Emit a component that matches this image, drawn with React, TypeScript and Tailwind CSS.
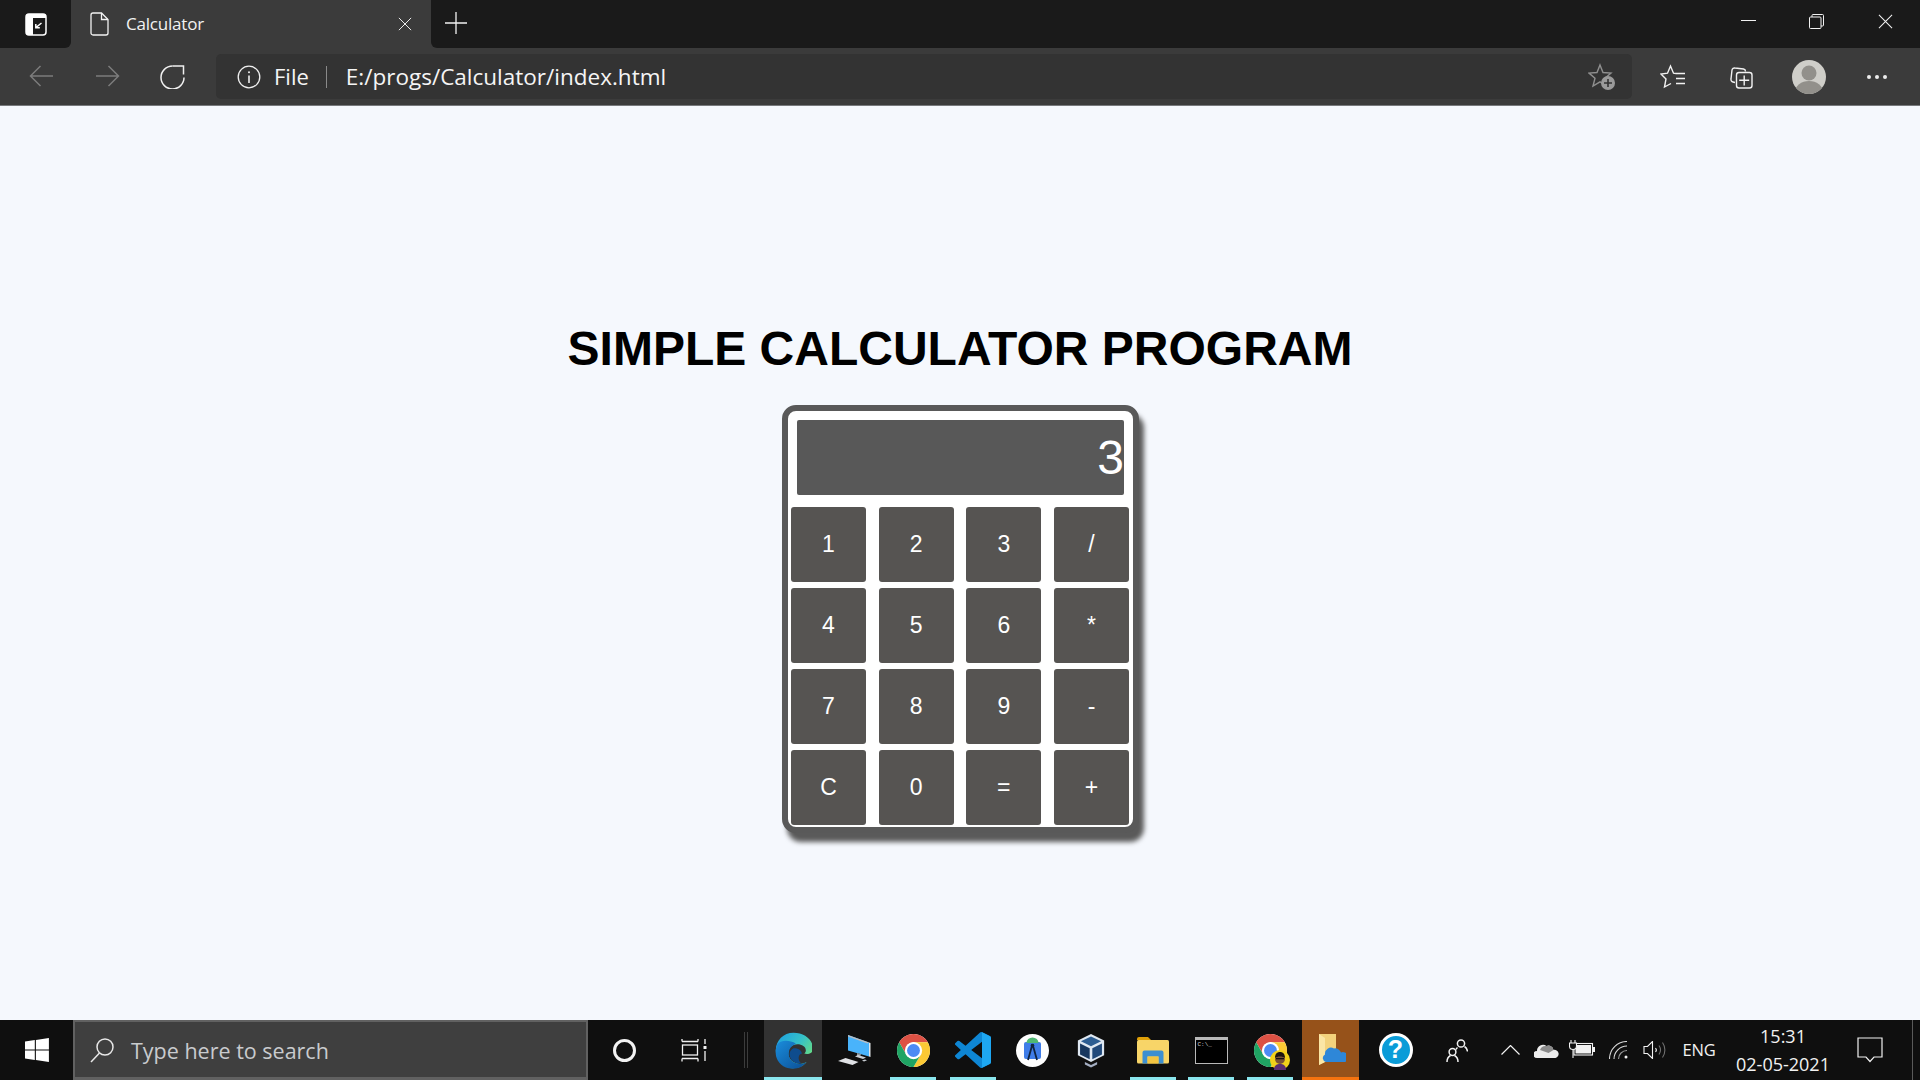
import type { ReactNode } from "react";

const uiFont = "font-['Open_Sans','Noto_Sans',sans-serif]";

const keys = ["1", "2", "3", "/", "4", "5", "6", "*", "7", "8", "9", "-", "C", "0", "=", "+"];

// ── Browser chrome icons ───────────────────────────────────────────────
function TabActionsIcon() {
  return (
    <svg width="22" height="23" viewBox="0 0 22 23" fill="none">
      <rect x="1" y="1" width="20" height="21" rx="3" fill="#1a1a1a" stroke="#fff" strokeWidth="1.500" />
      <path d="M1 3a2 2 0 0 1 2-2h16a2 2 0 0 1 2 2v2H8v17H3a2 2 0 0 1-2-2z" fill="#fff" />
      <path d="M16.500 10l-5.500 4.500M10.800 11v3.800h4" stroke="#fff" strokeWidth="1.500" />
    </svg>
  );
}

function PageIcon() {
  return (
    <svg width="19" height="24" viewBox="0 0 19 24" fill="none" stroke="#f2f2f2" strokeWidth="1.300">
      <path d="M3 1h8.500l6.500 6.500V21a2 2 0 0 1-2 2H3a2 2 0 0 1-2-2V3a2 2 0 0 1 2-2z" />
      <path d="M11.500 1v6.500H18" />
    </svg>
  );
}

function XIcon({ size, color = "#f2f2f2" }: { size: number; color?: string }) {
  return (
    <svg width={size} height={size} viewBox="0 0 16 16" fill="none" stroke={color} strokeWidth="1.100">
      <path d="M1 1l14 14M15 1L1 15" />
    </svg>
  );
}

function ArrowIcon({ flip }: { flip?: boolean }) {
  return (
    <svg width="25" height="22" viewBox="0 0 25 22" fill="none" stroke="#7c7c7c" strokeWidth="1.500" className={flip ? "-scale-x-100" : ""}>
      <path d="M24 11H1.500M11.500 1L1.500 11l10 10" />
    </svg>
  );
}

function RefreshIcon() {
  return (
    <svg width="26" height="27" viewBox="0 0 26 27" fill="none" stroke="#f0f0f0" strokeWidth="1.500">
      <path d="M24 15.500a11.500 11.500 0 1 1-11.500-11.500" />
      <path d="M12.500 4h11v8.500" />
    </svg>
  );
}

function InfoIcon() {
  return (
    <svg width="24" height="24" viewBox="0 0 24 24" fill="none" stroke="#f0f0f0" strokeWidth="1.300">
      <circle cx="12" cy="12" r="10.800" />
      <path d="M12 10.500v7.500" strokeWidth="1.600" />
      <circle cx="12" cy="7.200" r="1" fill="#f0f0f0" stroke="none" />
    </svg>
  );
}

function StarAddIcon() {
  return (
    <svg width="28" height="28" viewBox="0 0 28 28" fill="none">
      <path d="M11 2l3 7.500 8 .6-6 5.200 2 7.700-7-4.200-7 4.200 2-7.700-6-5.200 8-.6z" stroke="#8f8f8f" strokeWidth="1.400" transform="translate(1 0)" />
      <circle cx="20" cy="20" r="7" fill="#9a9a9a" />
      <path d="M20 16v8M16 20h8" stroke="#333" strokeWidth="1.600" />
    </svg>
  );
}

function FavoritesIcon() {
  return (
    <svg width="26" height="26" viewBox="0 0 26 26" fill="none" stroke="#f2f2f2" strokeWidth="1.400">
      <path d="M16 9.500l-2.500-.3L10.500 2 7.500 9.200l-6.500.8 5 5-1.500 8L11 19.500" />
      <path d="M16 9.500h9M16 14.500h9M16 19.500h9" />
    </svg>
  );
}

function CollectionsIcon() {
  return (
    <svg width="26" height="26" viewBox="0 0 26 26" fill="none" stroke="#f2f2f2" strokeWidth="1.400">
      <path d="M7 18.500l-2-.5a2.500 2.500 0 0 1-2-3L4 6a2.500 2.500 0 0 1 3-2l8.500 1a2.500 2.500 0 0 1 2 2.500" />
      <rect x="8.500" y="8.500" width="15.500" height="15.500" rx="2.500" />
      <path d="M16.200 11.500v10M11.200 16.300h10" />
    </svg>
  );
}

function AvatarIcon() {
  return (
    <svg width="34" height="34" viewBox="0 0 34 34">
      <defs>
        <clipPath id="avatar-clip">
          <circle cx="17" cy="17" r="17" />
        </clipPath>
      </defs>
      <circle cx="17" cy="17" r="17" fill="#cfcec9" />
      <g clipPath="url(#avatar-clip)" fill="#92908b">
        <circle cx="17" cy="13" r="7.500" />
        <ellipse cx="17" cy="32" rx="14" ry="11" />
      </g>
    </svg>
  );
}

// ── Taskbar icons ──────────────────────────────────────────────────────
function WindowsIcon() {
  return (
    <svg width="24" height="24" viewBox="0 0 24 24" fill="#fff">
      <path d="M0 3.500l9.800-1.400v9.300H0zM10.900 2l13-2v11.400h-13zM0 12.600h9.800v9.300L0 20.500zM10.900 12.600h13V24l-13-2z" />
    </svg>
  );
}

function SearchIcon() {
  return (
    <svg width="26" height="26" viewBox="0 0 26 26" fill="none" stroke="#e8e8e8" strokeWidth="1.500">
      <circle cx="16" cy="10" r="8" />
      <path d="M10.500 16L2 25" />
    </svg>
  );
}

function TaskViewIcon() {
  return (
    <svg width="26" height="24" viewBox="0 0 26 24" fill="none" stroke="#f2f2f2" strokeWidth="1.300">
      <path d="M1 3.500h16M1 1v2.500M17 1v2.500" />
      <rect x="1.500" y="7" width="15" height="10" />
      <path d="M1 20.500h16M1 20.500v3M17 20.500v3" />
      <path d="M24 1v5M24 13v10" />
      <rect x="22.500" y="8" width="3" height="3" fill="#f2f2f2" stroke="none" />
    </svg>
  );
}

function EdgeIcon() {
  return (
    <svg width="37" height="37" viewBox="0 0 48 48">
      <defs>
        <linearGradient id="edge-top" x1="0" y1="0" x2="1" y2="0.7">
          <stop offset="0" stopColor="#1b9de2" />
          <stop offset="0.55" stopColor="#35c1c8" />
          <stop offset="1" stopColor="#6fe07a" />
        </linearGradient>
        <linearGradient id="edge-low" x1="0" y1="0" x2="1" y2="1">
          <stop offset="0" stopColor="#1a8ddc" />
          <stop offset="1" stopColor="#0b4e94" />
        </linearGradient>
      </defs>
      <path d="M24 1C11 1 1 11 1 24c0 13 10 23 22 23 8 0 14-3 18-8-5 3-11 3-15 1-5-2-9-7-9-13 0-6 5-11 12-11 6 0 11 3 11 8 0 2-1 3-2 4 2 1 6 1 9-1 2-2 2-4 2-7C49 10 38 1 24 1z" fill="url(#edge-top)" />
      <path d="M3 16c-6 14 1 28 15 31 9 2 18-1 23-8-5 3-11 3-15 1-5-2-9-7-8-13 0-5 3-9 9-12-8-5-20-5-24 1z" fill="url(#edge-low)" />
      <path d="M27 40c-5-2-9-7-8-13 1-3 3-5 5-6 6 0 10 2 11 7-5 1-6 8-1 13-3 0-5 0-7-1z" fill="#0e4c8d" />
    </svg>
  );
}

function ComputerIcon() {
  return (
    <svg width="34" height="32" viewBox="0 0 34 32">
      <path d="M11 1l21 7.500v14L11 16.500z" fill="#49b3fb" />
      <path d="M11 1l21 7.500-1.500 1L11 2.500z" fill="#b8bdc2" />
      <path d="M32 8.500l1.500.5v14l-1.500-.5z" fill="#e2e5e8" />
      <path d="M20 19l4 1-1 3-3-1z" fill="#8f969c" />
      <path d="M18 22.500l3-1.500 8 2.500-3 1.500z" fill="#c9ced3" />
      <path d="M1 27l7.500-3 13 4-6 3z" fill="#e0e2e5" />
      <path d="M25 26.500l3-1 2 .8-3 1.200z" fill="#c9ced3" />
    </svg>
  );
}

function ChromeIcon() {
  const sector = "M43.050 13A22 22 0 0 0 4.950 13L14.470 29.500A11.500 11.500 0 0 1 24 13Z";
  return (
    <svg width="33" height="33" viewBox="2 2 44 44" className="block">
      <circle cx="24" cy="24" r="22" fill="#fff" />
      <path d={sector} fill="#dd5144" />
      <path d={sector} fill="#fcc934" transform="rotate(120 24 24)" />
      <path d={sector} fill="#1fa463" transform="rotate(240 24 24)" />
      <circle cx="24" cy="24" r="11.500" fill="#fff" />
      <circle cx="24" cy="24" r="8.600" fill="#4c8bf5" />
    </svg>
  );
}

function ProfileChromeIcon() {
  return (
    <div className="relative">
      <ChromeIcon />
      {/* profile badge */}
      <svg width="20" height="20" viewBox="0 0 20 20" className="absolute top-[16px] left-[16px]">
        <circle cx="10" cy="10" r="10" fill="#f1d11a" />
        <circle cx="10" cy="9" r="5" fill="#7a5236" />
        <path d="M5 8c0-4 2-6 5-6s5 2 5 6c-2-2-8-2-10 0z" fill="#1d1410" />
        <rect x="6" y="8" width="8" height="1.300" fill="#111" />
        <path d="M4 20c0-5 3-6 6-6s6 1 6 6z" fill="#5c2f72" />
      </svg>
    </div>
  );
}

function VscodeIcon() {
  return (
    <svg width="36" height="36" viewBox="0 0 24 24">
      <path
        d="M23.150 2.587L18.210.21a1.494 1.494 0 0 0-1.705.29l-9.460 8.630-4.120-3.128a.999.999 0 0 0-1.276.057L.327 7.261A1 1 0 0 0 .326 8.740L3.899 12 .326 15.260a1 1 0 0 0 .001 1.479L1.650 17.940a.999.999 0 0 0 1.276.057l4.120-3.128 9.460 8.630a1.492 1.492 0 0 0 1.704.29l4.942-2.377A1.500 1.500 0 0 0 24 20.060V3.939a1.500 1.500 0 0 0-.850-1.352zm-5.146 14.861L10.826 12l7.178-5.448v10.896z"
        fill="#0e86d4"
      />
      <path d="M18 .1l5.150 2.487A1.500 1.500 0 0 1 24 3.939V20.060a1.500 1.500 0 0 1-.850 1.352L18 23.900z" fill="#1ea7f2" />
    </svg>
  );
}

function AndroidStudioIcon() {
  return (
    <svg width="33" height="33" viewBox="0 0 33 33">
      <circle cx="16.500" cy="16.500" r="16.500" fill="#fff" />
      <rect x="8" y="8" width="17" height="17" rx="2" fill="#3f7de8" />
      <path d="M10.500 9a6 5.500 0 0 1 12 0z" fill="#4fb873" />
      <path d="M16.500 10l-4.500 16M16.500 10l4.500 16" stroke="#10243f" strokeWidth="1.800" fill="none" />
      <circle cx="16.500" cy="11.500" r="1.800" fill="#10243f" />
    </svg>
  );
}

function VirtualBoxIcon() {
  return (
    <svg width="30" height="35" viewBox="0 0 34 40">
      <path d="M17 1l15 7.500v17L17 33 2 25.500v-17z" fill="#dfe8f2" />
      <path d="M17 4l11.500 5.500L17 15 5.500 9.500z" fill="#2c5d92" />
      <path d="M4.500 12L15.500 17.500V30L4.500 24.500z" fill="#17375f" />
      <path d="M18.500 17.500L29.500 12V24.500L18.500 30z" fill="#21497a" />
      <path d="M10 33l7 3.500 7-3.500v3l-7 3.500-7-3.500z" fill="#a4aec2" />
    </svg>
  );
}

function ExplorerIcon() {
  return (
    <svg width="32" height="27" viewBox="0 0 32 27">
      <path d="M0 2a2 2 0 0 1 2-2h9l3 3h-14z" fill="#e0a008" />
      <rect x="0" y="3" width="32" height="23.500" rx="1.500" fill="#f8d568" />
      <path d="M5.500 26.500v-11a2 2 0 0 1 2-2h17a2 2 0 0 1 2 2v11h-5v-7h-11v7z" fill="#3d8fd1" />
      <rect x="10.500" y="19.500" width="11" height="7" fill="#f4c542" />
    </svg>
  );
}

function CmdIcon() {
  return (
    <div className="flex h-[27px] w-[33px] flex-col border border-[#b9b9b9]">
      <div className="h-[2px] bg-[#b9b9b9]" />
      <div className="flex-1 bg-black pl-[2px] font-['Liberation_Mono',monospace] text-[6px] leading-[10px] text-[#d0d0d0]">
        C:\_
      </div>
    </div>
  );
}

function OneDriveFolderIcon() {
  return (
    <svg width="28" height="32" viewBox="0 0 28 32">
      <path d="M1 1h17v28H7L1 32z" fill="#f3d27c" />
      <path d="M1 1l6 4v24l-6 3z" fill="#fbe6a5" />
      <path d="M8 29a4 4 0 0 1-1-7.500 6 6 0 0 1 9-6 6 6 0 0 1 7 4 5 5 0 0 1 4 9.500z" fill="#2e87d8" />
    </svg>
  );
}

function HelpIcon() {
  return (
    <div className="flex h-[34px] w-[34px] items-center justify-center rounded-full border-[3px] border-white bg-[#0a9cd8] font-['Liberation_Sans',sans-serif] text-[25px] font-bold text-white">
      ?
    </div>
  );
}

function PeopleIcon() {
  return (
    <svg width="22" height="23" viewBox="0 0 22 23" fill="none" stroke="#f2f2f2" strokeWidth="1.500">
      <circle cx="15" cy="4.500" r="3.600" />
      <path d="M11.500 8.500a6 6 0 0 0-1.500 2M18.500 7.500c2 1 2.700 2.500 3 5" />
      <circle cx="6.500" cy="13" r="3.400" />
      <path d="M1 23c0-4 1.500-5.500 3.500-6.500M12 23c0-4-1.500-5.500-3.500-6.500" />
    </svg>
  );
}

function ChevronIcon() {
  return (
    <svg width="19" height="10" viewBox="0 0 19 10" fill="none" stroke="#f2f2f2" strokeWidth="1.200">
      <path d="M.500 9.500L9.500.500l9 9" />
    </svg>
  );
}

function CloudIcon() {
  return (
    <svg width="25" height="16" viewBox="0 0 25 16">
      <path d="M3 16a3.500 3.500 0 0 1 0-7 6 6 0 0 1 9.500-5 5 5 0 0 1 7 4 4 4 0 0 1 2 8z" fill="#ededed" />
      <path d="M6 8a6 6 0 0 1 6.500-4 5 5 0 0 1 7 4l-5 3z" fill="#8c8c8c" />
    </svg>
  );
}

function BatteryIcon() {
  return (
    <svg width="26" height="20" viewBox="0 0 26 20" fill="none" stroke="#f2f2f2" strokeWidth="1.100">
      <rect x="5" y="3.500" width="18.500" height="11.500" />
      <rect x="6.500" y="5" width="15.500" height="8.500" fill="#f2f2f2" stroke="none" />
      <rect x="24" y="7" width="2" height="5" fill="#f2f2f2" stroke="none" />
      <path d="M2 0v3M6 0v3M0.500 3h7v3a3.500 3.500 0 0 1-7 0zM4 9.500v8.500" fill="#0f0f0f" />
    </svg>
  );
}

function WifiIcon() {
  return (
    <svg width="20" height="18" viewBox="0 0 20 18" fill="none" stroke="#d8d8d8" strokeWidth="1.100">
      <path d="M.500 18A17.500 17.500 0 0 1 18 .500" />
      <path d="M5 18A13 13 0 0 1 18 5" />
      <path d="M9.500 18A8.500 8.500 0 0 1 18 9.500" stroke="#9a9a9a" />
      <circle cx="17" cy="16" r="1.500" fill="#f2f2f2" stroke="none" />
    </svg>
  );
}

function VolumeIcon() {
  return (
    <svg width="23" height="18" viewBox="0 0 23 18" fill="none" stroke="#f2f2f2" strokeWidth="1.100">
      <path d="M1 5.500h3.500L9.500.500v17l-5-5H1z" />
      <path d="M12.500 7a3 3 0 0 1 0 4" />
      <path d="M16 4.500a8 8 0 0 1 0 9M19.500 1.500a13 13 0 0 1 0 15" stroke="#707070" />
    </svg>
  );
}

function NotificationIcon() {
  return (
    <svg width="26" height="26" viewBox="0 0 26 26" fill="none" stroke="#f2f2f2" strokeWidth="1.200">
      <path d="M1 1h24v19h-8l-4 4.500L9 20H1z" />
    </svg>
  );
}

function AppSlot({ w, active, pinned, children }: { w: string; active?: boolean; pinned?: boolean; children: ReactNode }) {
  return (
    <div className={`relative flex h-full items-center justify-center ${w} ${active ? "bg-[#323232]" : ""}`}>
      {children}
      {pinned && <div className="absolute bottom-0 left-1/2 h-[3px] w-[46px] -translate-x-1/2 bg-[#8ae6ee]" />}
      {active && <div className="absolute bottom-0 left-0 h-[3px] w-full bg-[#8ae6ee]" />}
    </div>
  );
}

function TraySlot({ w, children }: { w: string; children: ReactNode }) {
  return <div className={`flex h-full items-center justify-center ${w}`}>{children}</div>;
}

export default function App() {
  return (
    <div className={`flex h-[1080px] w-[1920px] flex-col overflow-hidden bg-[#f5f8fd] ${uiFont}`}>
      {/* ── Tab strip ───────────────────────────────────────────────────── */}
      <div className="flex h-12 shrink-0 items-stretch bg-[#3b3b3b]">
        <div className="flex w-[71px] items-center justify-center rounded-br-[6px] bg-[#1a1a1a]">
          <TabActionsIcon />
        </div>
        <div className="flex w-[360px] items-center rounded-t-[7px] pl-[19px] pr-[19px]">
          <PageIcon />
          <span className="ml-[17px] text-[17px] tracking-[-0.2px] text-[#f2f2f2]">Calculator</span>
          <div className="ml-auto">
            <XIcon size={14} />
          </div>
        </div>
        <div className="flex flex-1 rounded-bl-[6px] bg-[#1a1a1a]">
          <div className="flex w-[50px] items-center justify-center pb-[2px]">
            <svg width="22" height="22" viewBox="0 0 22 22" stroke="#f2f2f2" strokeWidth="1.300">
              <path d="M11 0v22M0 11h22" />
            </svg>
          </div>
          <div className="flex-1" />
          <div className="flex w-[68px] items-center justify-center pb-[8px]">
            <div className="h-px w-[15px] bg-[#f2f2f2]" />
          </div>
          <div className="flex w-[68px] items-center justify-center pb-[6px]">
            <svg width="15" height="15" viewBox="0 0 15 15" fill="none" stroke="#f2f2f2" strokeWidth="1">
              <rect x="0.500" y="3" width="11.500" height="11.500" rx="1" />
              <path d="M3 3V1.500a1 1 0 0 1 1-1h9.500a1 1 0 0 1 1 1V11a1 1 0 0 1-1 1H12" />
            </svg>
          </div>
          <div className="flex w-[70px] items-center justify-center pb-[6px]">
            <XIcon size={15} />
          </div>
        </div>
      </div>

      {/* ── Toolbar ─────────────────────────────────────────────────────── */}
      <div className="flex h-[58px] shrink-0 items-center border-b border-[#77797c] bg-[#3b3b3b] pl-2">
        <div className="flex w-[66px] justify-center pb-[2px]">
          <ArrowIcon />
        </div>
        <div className="flex w-[66px] justify-center pb-[2px]">
          <ArrowIcon flip />
        </div>
        <div className="flex w-[66px] justify-center pb-[2px]">
          <RefreshIcon />
        </div>
        <div className="ml-[10px] flex h-[45px] w-[1416px] items-center rounded-[5px] bg-[#333333] pl-[21px] pr-[16px] text-[#f5f5f5]">
          <InfoIcon />
          <span className="ml-[13px] text-[22px]">File</span>
          <div className="ml-[17px] h-[22px] w-px bg-[#8a8a8a]" />
          <span className="ml-[19px] text-[22.500px]">E:/progs/Calculator/index.html</span>
          <div className="ml-auto">
            <StarAddIcon />
          </div>
        </div>
        <div className="ml-[7px] flex w-[68px] justify-center">
          <FavoritesIcon />
        </div>
        <div className="flex w-[67px] justify-center">
          <CollectionsIcon />
        </div>
        <div className="flex w-[69px] justify-center">
          <AvatarIcon />
        </div>
        <div className="flex w-[68px] justify-center gap-[4px]">
          <div className="h-1 w-1 rounded-full bg-[#ececec]" />
          <div className="h-1 w-1 rounded-full bg-[#ececec]" />
          <div className="h-1 w-1 rounded-full bg-[#ececec]" />
        </div>
      </div>

      {/* ── Page ────────────────────────────────────────────────────────── */}
      <div className="flex flex-1 flex-col items-center pt-[215px] font-['Liberation_Sans',sans-serif]">
        <h1 className="text-[48px] font-bold leading-[56px] text-black">SIMPLE CALCULATOR PROGRAM</h1>
        <div className="ml-[1px] mt-[28px] h-[428px] w-[357px] rounded-[14px] border-[6px] border-[#595959] bg-white shadow-[5px_9px_5px_#5a5a5a]">
          <div className="mx-[9px] mt-[9px] flex h-[75px] items-center justify-end rounded-[2px] bg-[#585858] text-[48px] text-white">
            3
          </div>
          <div className="ml-[3px] mt-[12px] grid w-[338px] grid-cols-[repeat(4,75px)] justify-between gap-y-[6px]">
            {keys.map((k) => (
              <div key={k} className="flex h-[75px] items-center justify-center rounded-[3px] bg-[#565452] text-[23px] text-white">
                {k}
              </div>
            ))}
          </div>
        </div>
      </div>

      {/* ── Taskbar ─────────────────────────────────────────────────────── */}
      <div className="flex h-[60px] shrink-0 items-center bg-[#0f0f0f]">
        <TraySlot w="w-[73px]">
          <WindowsIcon />
        </TraySlot>
        <div className="flex h-full w-[515px] items-center border-2 border-b-[3px] border-[#616161] bg-[#3f3f3f] pl-[14px]">
          <SearchIcon />
          <span className="ml-[16px] mt-[3px] text-[21.500px] text-[#c9cbce]">Type here to search</span>
        </div>
        <TraySlot w="w-[72px]">
          <div className="h-[23px] w-[23px] rounded-full border-[3px] border-[#f2f2f2]" />
        </TraySlot>
        <TraySlot w="w-[68px]">
          <TaskViewIcon />
        </TraySlot>
        <div className="flex h-full w-[36px] items-center justify-center gap-[2px]">
          <div className="h-9 w-px bg-[#3c3c3c]" />
          <div className="h-9 w-px bg-[#3c3c3c]" />
        </div>
        <AppSlot w="w-[58px]" active>
          <EdgeIcon />
        </AppSlot>
        <AppSlot w="w-[64px]">
          <ComputerIcon />
        </AppSlot>
        <AppSlot w="w-[54px]" pinned>
          <ChromeIcon />
        </AppSlot>
        <AppSlot w="w-[66px]" pinned>
          <VscodeIcon />
        </AppSlot>
        <AppSlot w="w-[53px]">
          <AndroidStudioIcon />
        </AppSlot>
        <AppSlot w="w-[63px]">
          <VirtualBoxIcon />
        </AppSlot>
        <AppSlot w="w-[62px]" pinned>
          <ExplorerIcon />
        </AppSlot>
        <AppSlot w="w-[54px]" pinned>
          <CmdIcon />
        </AppSlot>
        <AppSlot w="w-[64px]" pinned>
          <ProfileChromeIcon />
        </AppSlot>
        <div className="flex h-full w-[57px] items-center justify-center border-b-[3px] border-[#f5730f] bg-[#96521a] pl-[3px]">
          <OneDriveFolderIcon />
        </div>
        <TraySlot w="w-[73px]">
          <HelpIcon />
        </TraySlot>
        <TraySlot w="w-[49px]">
          <PeopleIcon />
        </TraySlot>
        <div className="ml-[7px] flex h-full w-[44px] items-center justify-center">
          <ChevronIcon />
        </div>
        <TraySlot w="w-[28px]">
          <CloudIcon />
        </TraySlot>
        <TraySlot w="w-[44px]">
          <BatteryIcon />
        </TraySlot>
        <TraySlot w="w-[30px]">
          <WifiIcon />
        </TraySlot>
        <TraySlot w="w-[40px]">
          <VolumeIcon />
        </TraySlot>
        <TraySlot w="w-[50px]">
          <span className="text-[16.500px] tracking-[-0.2px] text-[#f2f2f2]">ENG</span>
        </TraySlot>
        <div className="flex h-full w-[118px] flex-col items-center justify-center gap-[7px] text-[18px] leading-[21px] text-[#f2f2f2]">
          <span>15:31</span>
          <span>02-05-2021</span>
        </div>
        <TraySlot w="w-[56px]">
          <NotificationIcon />
        </TraySlot>
        <div className="ml-auto mr-[7px] h-full w-px bg-[#5a5a5a]" />
      </div>
    </div>
  );
}
